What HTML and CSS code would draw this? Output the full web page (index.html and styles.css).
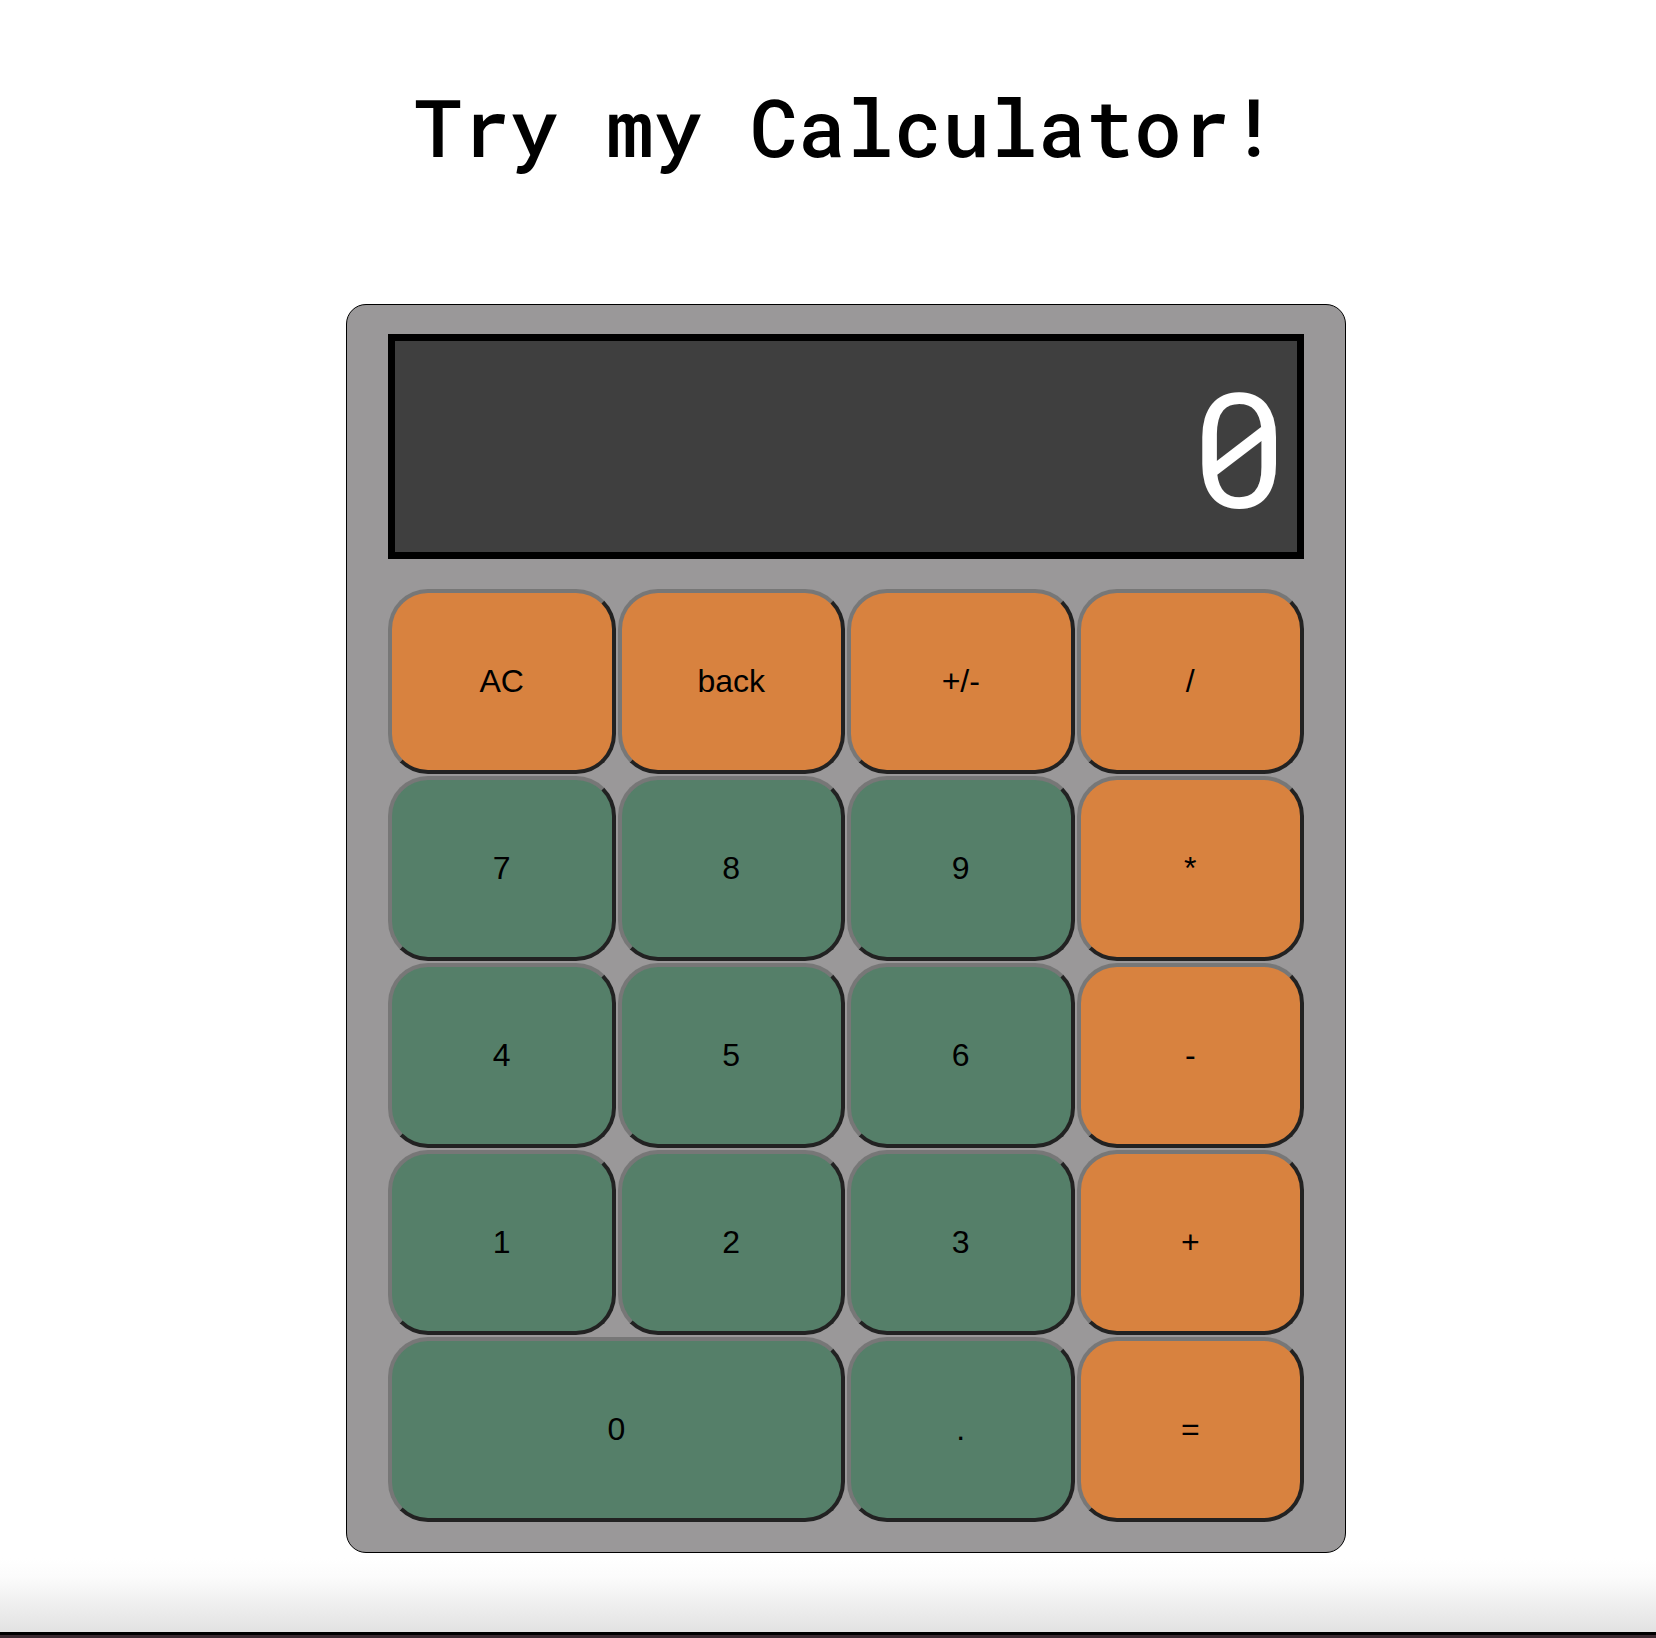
FILE: index.html
```html
<!DOCTYPE html>
<html lang="en">
<head>
<meta charset="utf-8">
<title>Calculator</title>
<link rel="stylesheet" href="styles.css">
</head>
<body>
<main class="page">
  <h1 class="title">Try my Calculator!</h1>
  <div class="calculator">
    <div class="display"><span class="display-value">0</span></div>
    <div class="keys">
      <button class="key op">AC</button>
      <button class="key op">back</button>
      <button class="key op">+/-</button>
      <button class="key op">/</button>
      <button class="key num">7</button>
      <button class="key num">8</button>
      <button class="key num">9</button>
      <button class="key op">*</button>
      <button class="key num">4</button>
      <button class="key num">5</button>
      <button class="key num">6</button>
      <button class="key op">-</button>
      <button class="key num">1</button>
      <button class="key num">2</button>
      <button class="key num">3</button>
      <button class="key op">+</button>
      <button class="key num wide">0</button>
      <button class="key num">.</button>
      <button class="key op">=</button>
    </div>
  </div>
</main>
<div class="screen-edge"></div>
</body>
</html>
```

FILE: styles.css
```css
html, body {
  height: 100%;
}
body {
  margin: 0;
  background: #ffffff;
  display: flex;
  flex-direction: column;
  overflow: hidden;
}
.page {
  padding-left: 36px;
  display: flex;
  flex-direction: column;
  align-items: center;
}
.title {
  margin: 76px 0 0 0;
  font-family: "Roboto Mono", "DejaVu Sans Mono", monospace;
  font-size: 80px;
  font-weight: 500;
  line-height: 100px;
  color: #000;
}
.calculator {
  margin-top: 128px;
  box-sizing: border-box;
  width: 1000px;
  padding: 29px 41px 30px 41px;
  background: #9a9899;
  border: 1px solid #000;
  border-radius: 20px;
}
.display {
  box-sizing: border-box;
  height: 225px;
  border: 7px solid #000;
  background: #3f3f3f;
  display: flex;
  justify-content: flex-end;
  align-items: center;
  padding: 0 10px 4px 0;
}
.display-value {
  font-family: "Roboto Mono", "DejaVu Sans Mono", monospace;
  font-size: 160px;
  line-height: 1;
  color: #fff;
}
.keys {
  margin-top: 30px;
  display: grid;
  grid-template-columns: repeat(4, 1fr);
  grid-auto-rows: 185px;
  gap: 2px;
}
.key {
  box-sizing: border-box;
  border-width: 4px;
  border-style: solid;
  border-color: #777 #222 #222 #777;
  border-radius: 40px;
  font-family: "Liberation Sans", Arial, sans-serif;
  font-size: 32px;
  color: #000;
  padding: 0;
}
.op {
  background: #d8823f;
}
.num {
  background: #557f69;
}
.wide {
  grid-column: span 2;
}
.screen-edge {
  margin-top: auto;
  height: 80px;
  flex: none;
  background: linear-gradient(to bottom, #ffffff 0px, #fbfbfb 20px, #e2e2e2 74px, #000 74px, #000 77px, #3b2a31 77px);
}
```
